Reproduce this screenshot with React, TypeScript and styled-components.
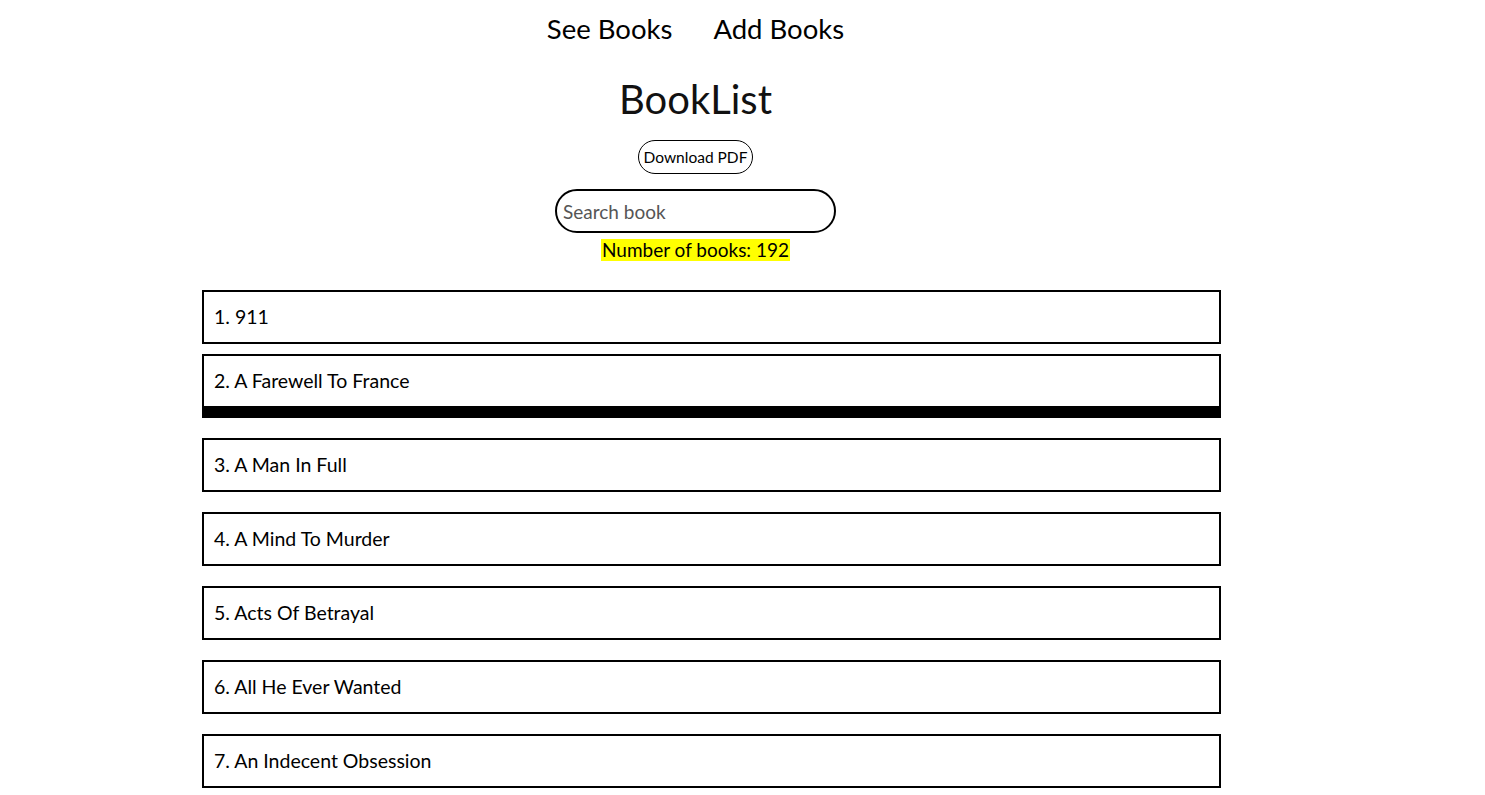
import React from 'react';
import styled, { createGlobalStyle } from 'styled-components';

const GlobalStyle = createGlobalStyle`
  html, body {
    margin: 0;
    padding: 0;
    overflow: hidden;
    background: #fff;
    font-family: Lato, "Open Sans", sans-serif;
    color: #000;
  }
`;

const Page = styled.div`
  width: 1391px;
  display: flex;
  flex-direction: column;
  align-items: center;
`;

const Nav = styled.nav`
  display: flex;
  justify-content: center;
  gap: 41px;
  padding-top: 9px;
  height: 41px;
`;

const NavLink = styled.a`
  font-size: 27.5px;
  line-height: 40px;
  color: #000;
  text-decoration: none;
  cursor: pointer;
`;

const Title = styled.h1`
  margin: 26px 0 0;
  font-size: 40px;
  line-height: 46px;
  font-weight: 400;
  color: #111;
`;

const PdfButton = styled.button`
  margin-top: 18px;
  height: 34px;
  padding: 0 5px;
  border: 1.5px solid #000;
  border-radius: 17px;
  background: #fff;
  font-family: inherit;
  font-size: 15.5px;
  color: #000;
  cursor: pointer;
`;

const SearchInput = styled.input`
  margin-top: 15px;
  width: 281px;
  height: 44px;
  box-sizing: border-box;
  padding: 0 6px;
  border: 2px solid #000;
  border-radius: 22px;
  font-family: inherit;
  font-size: 19px;
  outline: none;
  &::placeholder {
    color: #555;
  }
`;

const Count = styled.span`
  margin-top: 6px;
  background: #ffff00;
  font-size: 19px;
  line-height: 22px;
  padding: 0 1px;
`;

const List = styled.ul`
  align-self: flex-start;
  margin: 29px 0 0 202px;
  padding: 0;
  width: 1019px;
  list-style: none;
`;

const Item = styled.li<{ $lifted?: boolean }>`
  box-sizing: border-box;
  height: 54px;
  margin-bottom: 20px;
  padding: 0 10px 2px;
  border: 2px solid #000;
  display: flex;
  align-items: center;
  font-size: 19.5px;
  background: #fff;
  transform: ${(p) => (p.$lifted ? 'translateY(-10px)' : 'none')};
  box-shadow: ${(p) => (p.$lifted ? '0 10px 0 #000' : 'none')};
`;

const books = [
  '911',
  'A Farewell To France',
  'A Man In Full',
  'A Mind To Murder',
  'Acts Of Betrayal',
  'All He Ever Wanted',
  'An Indecent Obsession',
];

export default function App() {
  return (
    <>
      <GlobalStyle />
      <Page>
        <Nav>
          <NavLink>See Books</NavLink>
          <NavLink>Add Books</NavLink>
        </Nav>
        <Title>BookList</Title>
        <PdfButton>Download PDF</PdfButton>
        <SearchInput placeholder="Search book" autoFocus />
        <Count>Number of books: 192</Count>
        <List>
          {books.map((b, i) => (
            <Item key={b} $lifted={i === 1}>
              {i + 1}. {b}
            </Item>
          ))}
        </List>
      </Page>
    </>
  );
}
